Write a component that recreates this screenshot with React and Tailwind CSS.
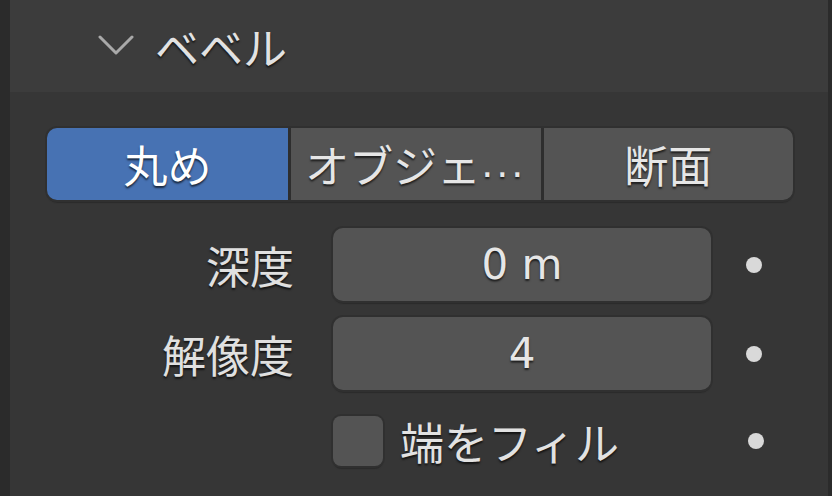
const jp = '"Noto Sans CJK JP", "DejaVu Sans", sans-serif';
const lat = '"DejaVu Sans", "Noto Sans CJK JP", sans-serif';

const shadowText = '[text-shadow:0_2px_2px_rgba(0,0,0,0.65)]';

const Dot = () => <div className="ml-[35px] w-4 h-4 rounded-full bg-[#d9d9d9]" />;

const FieldRow = ({ label, value }) => (
  <div className="flex items-center h-[73px]">
    <div
      className={`w-[284px] text-right text-[44px] leading-none text-[#e0e0e0] ${shadowText}`}
      style={{ fontFamily: jp }}
    >
      {label}
    </div>
    <div
      className={`ml-[39px] w-[378px] h-full flex items-center justify-center rounded-[10px] bg-[#545454] shadow-[0_0_0_2px_#303030,0_3px_1px_#2b2b2b] text-[42px] text-[#e6e6e6] ${shadowText}`}
      style={{ fontFamily: lat }}
    >
      {value}
    </div>
    <Dot />
  </div>
);

export default function App() {
  return (
    <div className="w-[832px] h-[496px] flex pl-[10px] pr-[4px] bg-[#2b2b2b] overflow-hidden">
      <div className="flex-1 flex flex-col bg-[#363636]">
        {/* Panel header */}
        <div className="h-[92px] shrink-0 flex items-center pl-[88px] bg-[#3c3c3c]">
          <svg width="36" height="22" viewBox="0 0 36 22" fill="none" className="mt-[-2px]">
            <polyline points="2,3 18,19 34,3" stroke="#a9a9a9" strokeWidth="3" strokeLinecap="round" strokeLinejoin="round" />
          </svg>
          <span
            className={`ml-[21px] text-[44px] leading-none text-[#e2e2e2] ${shadowText}`}
            style={{ fontFamily: jp }}
          >
            ベベル
          </span>
        </div>

        {/* Body */}
        <div className="flex-1 flex flex-col pt-[36px]">
          {/* Segmented control */}
          <div className="ml-[37px] mr-[35px] h-[72px] flex gap-[3px] rounded-[10px] overflow-hidden bg-[#2e2e2e] shadow-[0_0_0_2px_#303030,0_3px_1px_#2b2b2b]">
            <div
              className={`w-[241px] flex items-center justify-center bg-[#4772b3] text-[44px] text-white ${shadowText}`}
              style={{ fontFamily: jp }}
            >
              丸め
            </div>
            <div
              className={`flex-1 flex items-center justify-center bg-[#545454] text-[#e6e6e6] ${shadowText}`}
            >
              <span className="text-[44px]" style={{ fontFamily: jp }}>オブジェ</span>
              <span className="text-[38px] tracking-[3px]" style={{ fontFamily: lat }}>...</span>
            </div>
            <div
              className={`flex-1 flex items-center justify-center bg-[#545454] text-[44px] text-[#e6e6e6] ${shadowText}`}
              style={{ fontFamily: jp }}
            >
              断面
            </div>
          </div>

          <div className="mt-[28px] flex flex-col gap-[16px]">
            <FieldRow label="深度" value="0 m" />
            <FieldRow label="解像度" value="4" />
          </div>

          {/* Checkbox row */}
          <div className="mt-[26px] flex items-center h-[50px]">
            <div className="ml-[323px] w-[50px] h-[50px] rounded-[8px] bg-[#545454] shadow-[0_0_0_2px_#303030,0_3px_1px_#2b2b2b]" />
            <span
              className={`ml-[17px] text-[44px] leading-none text-[#e2e2e2] ${shadowText}`}
              style={{ fontFamily: jp }}
            >
              端をフィル
            </span>
            <div className="ml-auto mr-[64px] w-4 h-4 rounded-full bg-[#d9d9d9]" />
          </div>
        </div>
      </div>
    </div>
  );
}
